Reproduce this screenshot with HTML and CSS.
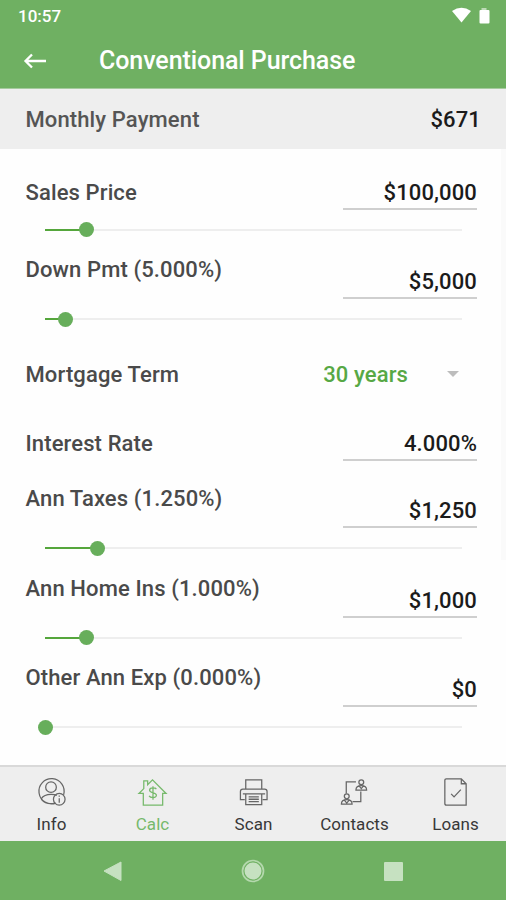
FILE: index.html
```html
<!DOCTYPE html>
<html lang="en">
<head>
<meta charset="utf-8">
<title>Conventional Purchase</title>
<link rel="stylesheet" href="styles.css">
</head>
<body>
<div class="app">
  <header class="header">
    <div class="status">
      <span>10:57</span>
      <svg width="40" height="18" viewBox="0 0 40 18" fill="#fff"><path d="M1 4Q10.500-2.500 20 4L10.500 15.500Z"/><path opacity=".55" d="M30.500 1h5V3h-5z"/><rect x="28.500" y="3" width="10" height="13.500" rx="1"/></svg>
    </div>
    <div class="titlebar">
      <svg class="back" width="24" height="18" viewBox="0 0 24 18" fill="none" stroke="#fff" stroke-width="2.300"><path d="M23 9H2.500M9 2.500L2.500 9L9 15.500"/></svg>
      <h1>Conventional Purchase</h1>
    </div>
  </header>
  <section class="summary"><span>Monthly Payment</span><strong>$671</strong></section>
  <main class="form">
    <div class="field first"><div class="row"><label>Sales Price</label><span class="value">$100,000</span></div><div class="slider" style="--v:41.5px"><i></i><b></b></div></div>
    <div class="field"><div class="row"><label>Down Pmt (5.000%)</label><span class="value">$5,000</span></div><div class="slider" style="--v:20.5px"><i></i><b></b></div></div>
    <div class="term"><label>Mortgage Term</label><span class="select">30 years</span><i class="caret"></i></div>
    <div class="rate"><div class="row"><label>Interest Rate</label><span class="value">4.000%</span></div></div>
    <div class="field"><div class="row"><label>Ann Taxes (1.250%)</label><span class="value">$1,250</span></div><div class="slider" style="--v:52px"><i></i><b></b></div></div>
    <div class="field"><div class="row"><label>Ann Home Ins (1.000%)</label><span class="value">$1,000</span></div><div class="slider" style="--v:41.5px"><i></i><b></b></div></div>
    <div class="field"><div class="row"><label>Other Ann Exp (0.000%)</label><span class="value">$0</span></div><div class="slider" style="--v:0px"><i></i><b></b></div></div>
  </main>
  <nav class="tabs">
    <div class="tab"><svg viewBox="0 0 32 32"><path d="M20.500 28A13 13 0 1 1 28.500 19.500M5.500 23.500C8 19.500 12 19 15.500 19c3 0 4.500.3 6 1M5.500 24c3 3.500 8 5.500 14 4"/><circle cx="15.500" cy="11.500" r="5.500"/><circle cx="24" cy="24" r="6"/><path d="M24 23v4.500M24 20v1.500"/></svg><span>Info</span></div>
    <div class="tab active"><svg viewBox="0 0 32 32"><path d="M2 18L7 13V5h4v4l5-5L30 18H26.500V30H6.500V18Z"/><path d="M20 13.500c-1-1.500-7-2-7 1.300 0 3.500 7 1.500 7 5 0 3.500-6.500 2.700-7.500.7M16.500 10.500v14"/></svg><span>Calc</span></div>
    <div class="tab"><svg viewBox="0 0 32 32"><path d="M8 13.500V4H24.500v9.500M7 24.500H2.500V16q0-2.500 2.500-2.500H27.500q2.500 0 2.500 2.500V24.500H25.500M5 18.500H28M8 18.500H24.500V29.500H8ZM11 21.500H21.500M11 24H21.500M11 26.500H21.500"/></svg><span>Scan</span></div>
    <div class="tab"><svg viewBox="0 0 32 32"><path d="M17.500 6H7.500v12M14 26.500H22.500V16"/><circle cx="23" cy="6.500" r="2.500"/><path d="M17.500 14.500c0-3.500 2.500-4.500 5.500-4.500s5.500 1 5.500 4.500ZM20.500 10l2.500 3L25.500 10"/><circle cx="8" cy="21" r="2.500"/><path d="M2.500 29c0-3.500 2.500-4.500 5.500-4.500s5.500 1 5.500 4.500ZM5.500 25L8 28l2.500-3"/></svg><span>Contacts</span></div>
    <div class="tab"><svg viewBox="0 0 32 32"><path d="M6.500 3H22L27 8V30H6.500Q5 30 5 28.500V4.500Q5 3 6.500 3ZM22 3V8H27M11.500 18.500l3 3 7-7.500"/></svg><span>Loans</span></div>
  </nav>
  <footer class="system">
    <svg viewBox="0 0 26 26"><path d="M4 13L21 4v18.500Z" stroke="#c6e1c1" stroke-linejoin="round"/></svg>
    <svg viewBox="0 0 26 26"><circle cx="13" cy="13" r="8.500"/><circle cx="13" cy="13" r="10.500" fill="none" stroke="#b4d8ad" stroke-width="1.700"/></svg>
    <svg viewBox="0 0 26 26"><rect x="4" y="4" width="19" height="19" rx="1"/></svg>
  </footer>
</div>
</body>
</html>
```
FILE: styles.css
```css
* { box-sizing: border-box; }
body { margin: 0; background: #fff; font-family: Roboto, "Liberation Sans", sans-serif; }
.app { width: 506px; height: 900px; display: flex; flex-direction: column; overflow: hidden; background: #fefefe; }
.header { height: 89px; flex: none; background: #6fb062; color: #fff; border-bottom: 1px solid #a5cb9e; }
.status { height: 32px; display: flex; justify-content: space-between; align-items: center; padding: 0 15px 0 18px; font-size: 17px; font-weight: 500; }
.titlebar { height: 56px; display: flex; align-items: center; padding: 1px 23px 0; }
.back { margin-right: 52px; }
h1 { margin: 0; padding-top: 1px; font-size: 25px; line-height: 30px; font-weight: 500; letter-spacing: -.08px; }
.summary { height: 60px; flex: none; display: flex; justify-content: space-between; align-items: center; padding: 1px 25px 0 25.500px; background: #eee; color: #555; font-size: 22px; font-weight: 500; letter-spacing: .12px; }
.summary strong { color: #1b1b1b; font-weight: 500; }
.form { height: 616px; flex: none; padding-top: 7px; background: linear-gradient(#fafafa, #fafafa) right top / 5px 411px no-repeat; color: #4a4a4a; font-size: 22px; line-height: 25px; font-weight: 500; letter-spacing: .12px; }
.field { height: 89.500px; padding: 11.500px 29px 0 25.500px; }
.row { display: flex; justify-content: space-between; height: 42px; }
.value { width: 134px; height: 30px; align-self: flex-end; border-bottom: 2px solid #cfcfcf; text-align: right; color: #1b1b1b; }
.first .row { height: 30px; margin-top: 12px; }
.slider { display: flex; align-items: center; height: 15px; width: 417px; margin: 12.500px 0 0 19.500px; background: linear-gradient(#eee, #eee) center / 100% 2px no-repeat; }
.slider i { width: var(--v); height: 2px; background: #55a63c; }
.slider b { width: 15px; height: 15px; flex: none; margin-left: -7.500px; border-radius: 50%; background: #67ae5b; }
.term { display: flex; align-items: center; height: 78px; padding: 0 47px 0 25.500px; }
.select { margin-left: auto; color: #57a845; }
.caret { margin-left: 39px; border: 6px solid transparent; border-top-color: #bdbdbd; border-bottom: 0; }
.rate { height: 61.500px; padding: 18px 29px 0 25.500px; }
.rate .row { height: 30px; }
.tabs { height: 76px; flex: none; display: flex; padding-left: 1px; background: #eee; border-top: 2px solid #d9d9d9; }
.tab { flex: 1; display: flex; flex-direction: column; align-items: center; padding-top: 9px; color: #383838; font-size: 17px; line-height: 22px; letter-spacing: .05px; }
.tab svg { width: 31px; height: 31px; margin-bottom: 6px; fill: none; stroke: #666; stroke-width: 1.300; }
.active { color: #76b96b; }
.tab.active svg { stroke: #76b96b; }
.tab.active { color: #76b96b; }
.system { flex: 1; display: flex; justify-content: space-between; align-items: center; padding: 0 100px; background: #6fb062; }
.system svg { width: 26px; height: 26px; fill: #c6e1c1; }
```
